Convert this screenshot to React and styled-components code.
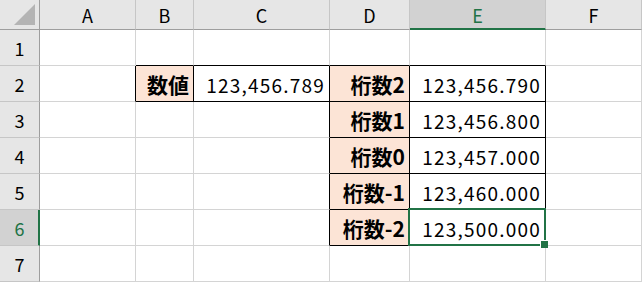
import React from "react";
import styled, { createGlobalStyle } from "styled-components";

const GlobalStyle = createGlobalStyle`
  html, body {
    margin: 0;
    padding: 0;
    background: #ffffff;
  }
  body {
    font-family: "Noto Sans CJK JP", "Noto Sans", sans-serif;
  }
`;

const GRID = "#d4d4d4";
const HEAD_LINE = "#9e9e9e";
const GREEN = "#217346";

const colWidths = [40, 96, 58, 136, 80, 136, 96];
const columns = ["A", "B", "C", "D", "E", "F"];

const Sheet = styled.div`
  position: relative;
  display: grid;
  grid-template-columns: ${colWidths.map((w) => `${w}px`).join(" ")};
  grid-template-rows: 30px repeat(7, 36px);
  width: 642px;
  height: 282px;
  overflow: hidden;
`;

const Corner = styled.div`
  background: #e6e6e6;
  border-right: 1px solid ${HEAD_LINE};
  border-bottom: 1px solid ${HEAD_LINE};
  display: flex;
  align-items: flex-end;
  justify-content: flex-end;
  padding: 0 3px 3px 0;
  box-sizing: border-box;
`;

const ColHead = styled.div`
  box-sizing: border-box;
  background: ${(p) => (p.$active ? "#d2d2d2" : "#e6e6e6")};
  border-right: 1px solid #c6c6c6;
  border-bottom: ${(p) => (p.$active ? `2px solid ${GREEN}` : `1px solid ${HEAD_LINE}`)};
  color: ${(p) => (p.$active ? GREEN : "#000")};
  font-size: 18px;
  display: flex;
  align-items: center;
  justify-content: center;
  padding-top: ${(p) => (p.$active ? "1px" : "0")};
`;

const RowHead = styled.div`
  box-sizing: border-box;
  background: ${(p) => (p.$active ? "#d2d2d2" : "#e6e6e6")};
  border-right: ${(p) => (p.$active ? `2px solid ${GREEN}` : `1px solid ${HEAD_LINE}`)};
  border-bottom: 1px solid #c6c6c6;
  color: ${(p) => (p.$active ? GREEN : "#000")};
  font-size: 18px;
  display: flex;
  align-items: center;
  justify-content: center;
  padding-left: ${(p) => (p.$active ? "1px" : "0")};
`;

const Cell = styled.div`
  box-sizing: border-box;
  background: ${(p) => (p.$fill ? "#fce4d6" : "#ffffff")};
  border-right: 1px solid ${(p) => (p.$right ? "#000" : GRID)};
  border-bottom: 1px solid ${(p) => (p.$bottom ? "#000" : GRID)};
  display: flex;
  align-items: center;
  justify-content: flex-end;
  padding: 1px 4px 0 0;
  font-size: ${(p) => (p.$bold ? "21px" : "19px")};
  font-weight: ${(p) => (p.$bold ? 700 : 400)};
  color: #000;
  white-space: nowrap;
  letter-spacing: ${(p) => (p.$bold ? "0" : "1.2px")};
`;

const Selection = styled.div`
  position: absolute;
  left: 408px;
  top: 208px;
  width: 138px;
  height: 38px;
  box-sizing: border-box;
  border: 2px solid ${GREEN};
  pointer-events: none;
`;

const Handle = styled.div`
  position: absolute;
  left: 541px;
  top: 241px;
  width: 7px;
  height: 7px;
  background: ${GREEN};
  border-top: 1px solid #fff;
  border-left: 1px solid #fff;
  box-sizing: content-box;
  margin: -1px 0 0 -1px;
`;

// row -> column index (0 = A) -> cell content
const data = {
  2: { 1: { text: "数値", bold: true, fill: true }, 2: { text: "123,456.789" }, 3: { text: "桁数2", bold: true, fill: true }, 4: { text: "123,456.790" } },
  3: { 3: { text: "桁数1", bold: true, fill: true }, 4: { text: "123,456.800" } },
  4: { 3: { text: "桁数0", bold: true, fill: true }, 4: { text: "123,457.000" } },
  5: { 3: { text: "桁数-1", bold: true, fill: true }, 4: { text: "123,460.000" } },
  6: { 3: { text: "桁数-2", bold: true, fill: true }, 4: { text: "123,500.000" } },
};

const boxed = (r, c) => !!(data[r] && data[r][c]);

const App = () => {
  const rows = [1, 2, 3, 4, 5, 6, 7];
  return (
    <>
      <GlobalStyle />
      <Sheet>
        <Corner>
          <svg width="22" height="22" viewBox="0 0 22 22">
            <polygon points="21,0 21,21 0,21" fill="#b4b4b4" />
          </svg>
        </Corner>
        {columns.map((c) => (
          <ColHead key={c} $active={c === "E"}>{c}</ColHead>
        ))}
        {rows.map((r) => (
          <React.Fragment key={r}>
            <RowHead $active={r === 6}>{r}</RowHead>
            {columns.map((_, c) => {
              const cell = data[r] && data[r][c];
              return (
                <Cell
                  key={c}
                  $fill={cell && cell.fill}
                  $bold={cell && cell.bold}
                  $right={boxed(r, c) || boxed(r, c + 1)}
                  $bottom={boxed(r, c) || boxed(r + 1, c)}
                >
                  {cell ? cell.text : ""}
                </Cell>
              );
            })}
          </React.Fragment>
        ))}
        <Selection />
        <Handle />
      </Sheet>
    </>
  );
};

export default App;
